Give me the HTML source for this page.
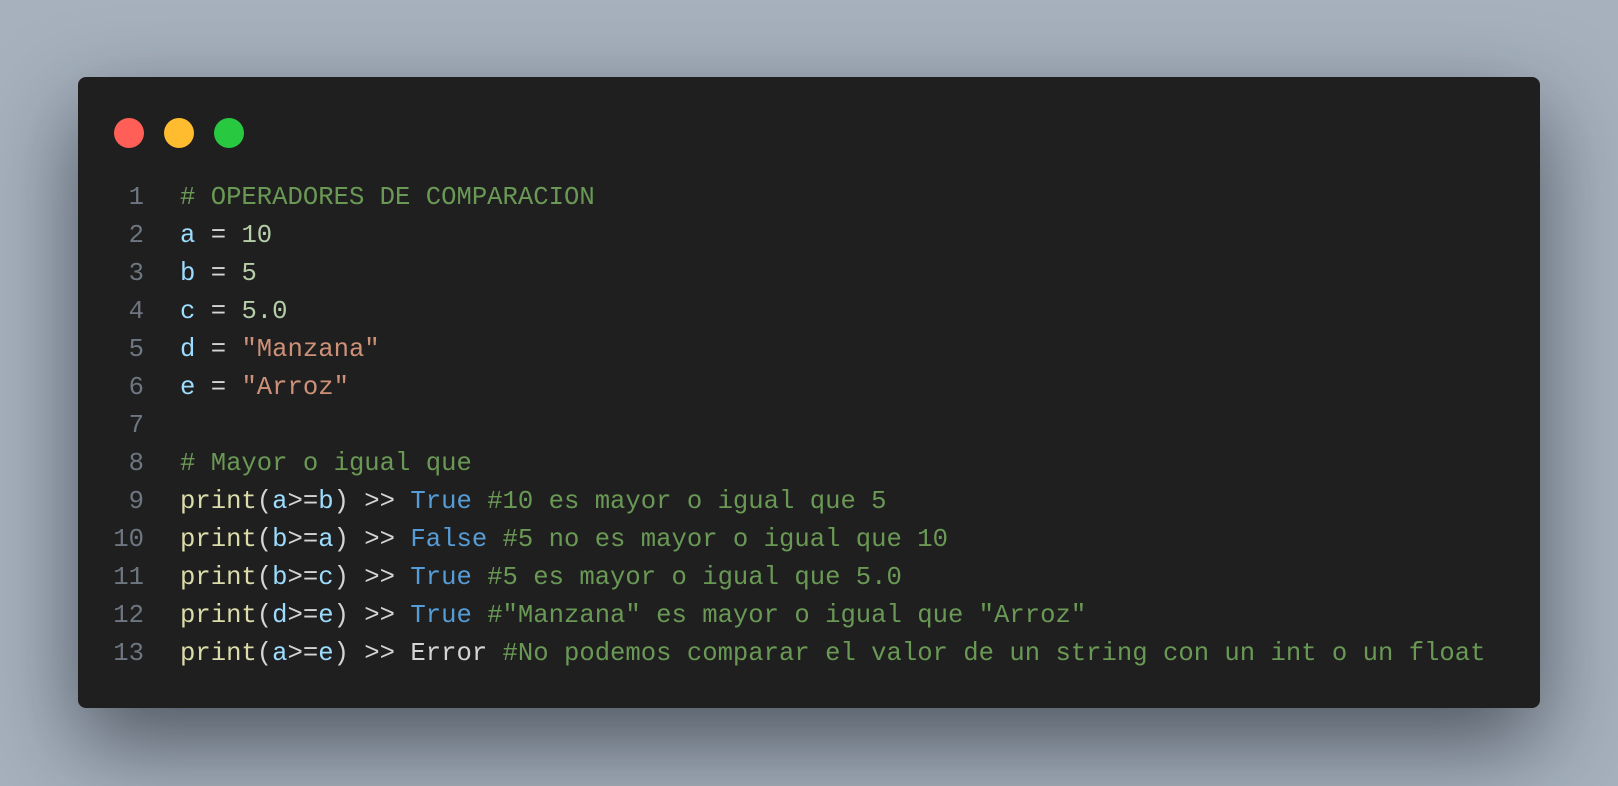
<!DOCTYPE html>
<html><head><style>
html,body{margin:0;width:1618px;height:786px;overflow:hidden;background:#a6b1bd;}
.win{position:absolute;left:78px;top:77px;width:1462px;height:631px;background:#1f1f1f;border-radius:8px;box-shadow:0 35px 90px rgba(20,25,35,0.6);}
.dot{position:absolute;top:41px;width:30px;height:30px;border-radius:50%;}
pre{position:absolute;left:0;top:102px;margin:0;font-family:"Liberation Mono",monospace;font-size:25.6px;line-height:38px;color:#d4d4d4;}
.n{display:inline-block;width:66px;text-align:right;color:#6e7681;margin-right:36px;}
.c{color:#6a9955}.v{color:#9cdcfe}.num{color:#b5cea8}.s{color:#ce9178}.k{color:#569cd6}.f{color:#dcdcaa}
</style></head><body>
<div class="win">
<div class="dot" style="left:36px;background:#ff5f57"></div>
<div class="dot" style="left:86px;background:#febc2e"></div>
<div class="dot" style="left:136px;background:#28c840"></div>
<pre><span class="n">1</span><span class="c"># OPERADORES DE COMPARACION</span>
<span class="n">2</span><span class="v">a</span> = <span class="num">10</span>
<span class="n">3</span><span class="v">b</span> = <span class="num">5</span>
<span class="n">4</span><span class="v">c</span> = <span class="num">5.0</span>
<span class="n">5</span><span class="v">d</span> = <span class="s">"Manzana"</span>
<span class="n">6</span><span class="v">e</span> = <span class="s">"Arroz"</span>
<span class="n">7</span>
<span class="n">8</span><span class="c"># Mayor o igual que</span>
<span class="n">9</span><span class="f">print</span>(<span class="v">a</span>&gt;=<span class="v">b</span>) &gt;&gt; <span class="k">True</span> <span class="c">#10 es mayor o igual que 5</span>
<span class="n">10</span><span class="f">print</span>(<span class="v">b</span>&gt;=<span class="v">a</span>) &gt;&gt; <span class="k">False</span> <span class="c">#5 no es mayor o igual que 10</span>
<span class="n">11</span><span class="f">print</span>(<span class="v">b</span>&gt;=<span class="v">c</span>) &gt;&gt; <span class="k">True</span> <span class="c">#5 es mayor o igual que 5.0</span>
<span class="n">12</span><span class="f">print</span>(<span class="v">d</span>&gt;=<span class="v">e</span>) &gt;&gt; <span class="k">True</span> <span class="c">#"Manzana" es mayor o igual que "Arroz"</span>
<span class="n">13</span><span class="f">print</span>(<span class="v">a</span>&gt;=<span class="v">e</span>) &gt;&gt; Error <span class="c">#No podemos comparar el valor de un string con un int o un float</span></pre>
</div>
</body></html>
